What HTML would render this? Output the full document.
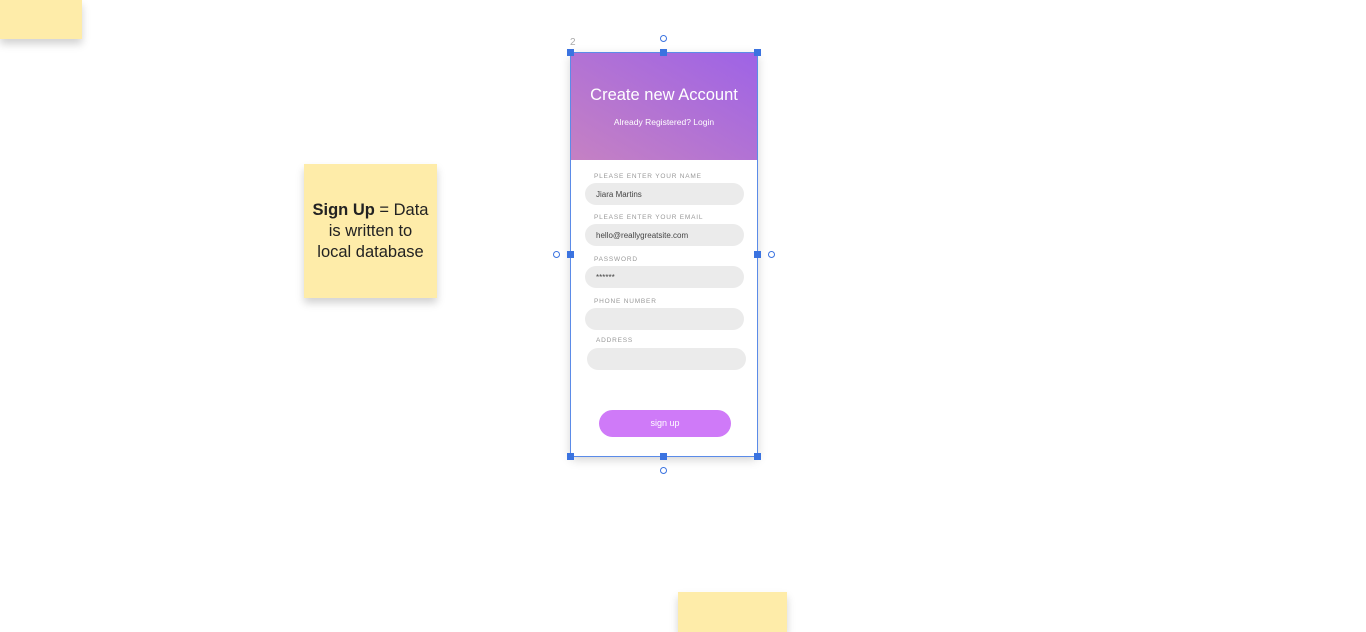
<!DOCTYPE html>
<html><head><meta charset="utf-8"><style>
*{margin:0;padding:0;box-sizing:border-box}
body{width:1366px;height:624px;background:#fff;position:relative;overflow:hidden;font-family:"Liberation Sans",sans-serif}
.s{position:absolute;background:#feeca9;box-shadow:0 5px 8px rgba(0,0,0,.18)}
.frame{position:absolute;left:571px;top:53px;width:186px;height:403px;background:#fff;box-shadow:0 3px 10px rgba(0,0,0,.2)}
.hdr{position:absolute;left:0;top:0;width:186px;height:107px;background:linear-gradient(30deg,#c581c3,#9e63e6);color:#fff;text-align:center}
.lab{position:absolute;font-size:6.5px;letter-spacing:.8px;color:#999}
.pill{position:absolute;width:159px;height:22px;border-radius:11px;background:#ebebeb;font-size:8px;color:#444;padding:7px 0 0 11px}
.h{position:absolute;width:7px;height:7px;background:#3b73e0}
.c{position:absolute;width:7px;height:7px;border:1px solid #3b73e0;border-radius:50%;background:#fff}
</style></head><body>
<div class="s" style="left:0;top:0;width:82px;height:39px"></div>
<div class="s" style="left:678px;top:592px;width:109px;height:40px"></div>
<div class="s" style="left:304px;top:164px;width:133px;height:134px;text-align:center;font-size:16.5px;line-height:21px;color:#222;padding-top:36px">
<b>Sign Up</b> = Data<br>is written to<br>local database</div>
<div style="position:absolute;left:570px;top:37px;font-size:10px;color:#aaa">2</div>
<div class="frame">
<div class="hdr"><div style="font-size:16.5px;padding-top:33px">Create new Account</div><div style="font-size:8.5px;margin-top:12px">Already Registered? Login</div></div>
<div class="lab" style="left:23px;top:120px">PLEASE ENTER YOUR NAME</div>
<div class="pill" style="left:14px;top:130px">Jiara Martins</div>
<div class="lab" style="left:23px;top:161px">PLEASE ENTER YOUR EMAIL</div>
<div class="pill" style="left:14px;top:171px">hello@reallygreatsite.com</div>
<div class="lab" style="left:23px;top:203px">PASSWORD</div>
<div class="pill" style="left:14px;top:213px">******</div>
<div class="lab" style="left:23px;top:245px">PHONE NUMBER</div>
<div class="pill" style="left:14px;top:255px"></div>
<div class="lab" style="left:25px;top:284px">ADDRESS</div>
<div class="pill" style="left:16px;top:295px"></div>
<div style="position:absolute;left:28px;top:357px;width:132px;height:27px;border-radius:14px;background:#cf7af8;color:#fff;font-size:9px;text-align:center;line-height:27px">sign up</div>
</div>
<div style="position:absolute;left:570px;top:52px;width:188px;height:405px;border:1px solid #5b8be8"></div>
<div class="h" style="left:567px;top:49px"></div><div class="h" style="left:660px;top:49px"></div><div class="h" style="left:754px;top:49px"></div>
<div class="h" style="left:567px;top:251px"></div><div class="h" style="left:754px;top:251px"></div>
<div class="h" style="left:567px;top:453px"></div><div class="h" style="left:660px;top:453px"></div><div class="h" style="left:754px;top:453px"></div>
<div class="c" style="left:660px;top:35px"></div><div class="c" style="left:660px;top:467px"></div>
<div class="c" style="left:553px;top:251px"></div><div class="c" style="left:768px;top:251px"></div>
</body></html>
